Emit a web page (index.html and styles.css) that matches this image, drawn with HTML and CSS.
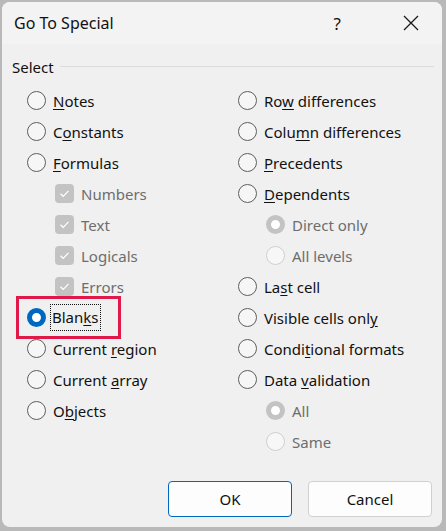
FILE: index.html
```html
<!DOCTYPE html>
<html>
<head>
<meta charset="utf-8">
<link rel="stylesheet" href="styles.css">
</head>
<body>
<div class="dialog">
  <div class="titlebar">
    <span class="title">Go To Special</span>
    <span class="help">?</span>
    <span class="close"><svg width="16" height="16" viewBox="0 0 16 16"><path d="M1 1 L15 15 M15 1 L1 15" stroke="#1a1a1a" stroke-width="1.3" fill="none"/></svg></span>
  </div>
  <div class="content">
    <div class="group-label"><span>Select</span><span class="rule"></span></div>
    <div class="columns">
      <div class="col col-left">
        <div class="opt"><span class="radio"></span><span class="lbl"><u>N</u>otes</span></div>
        <div class="opt"><span class="radio"></span><span class="lbl">C<u>o</u>nstants</span></div>
        <div class="opt"><span class="radio"></span><span class="lbl"><u>F</u>ormulas</span></div>
        <div class="opt sub"><span class="check"><svg width="19" height="19" viewBox="0 0 19 19"><path d="M5.5 9.8 L8.2 12.3 L13.5 6.8" stroke="#fff" stroke-width="1.2" fill="none"/></svg></span><span class="lbl dis">Numbers</span></div>
        <div class="opt sub"><span class="check"><svg width="19" height="19" viewBox="0 0 19 19"><path d="M5.5 9.8 L8.2 12.3 L13.5 6.8" stroke="#fff" stroke-width="1.2" fill="none"/></svg></span><span class="lbl dis">Text</span></div>
        <div class="opt sub"><span class="check"><svg width="19" height="19" viewBox="0 0 19 19"><path d="M5.5 9.8 L8.2 12.3 L13.5 6.8" stroke="#fff" stroke-width="1.2" fill="none"/></svg></span><span class="lbl dis">Logicals</span></div>
        <div class="opt sub"><span class="check"><svg width="19" height="19" viewBox="0 0 19 19"><path d="M5.5 9.8 L8.2 12.3 L13.5 6.8" stroke="#fff" stroke-width="1.2" fill="none"/></svg></span><span class="lbl dis">Errors</span></div>
        <div class="opt highlight"><span class="radio on"></span><span class="lbl focus">Blan<u>k</u>s</span></div>
        <div class="opt"><span class="radio"></span><span class="lbl">Current <u>r</u>egion</span></div>
        <div class="opt"><span class="radio"></span><span class="lbl">Current <u>a</u>rray</span></div>
        <div class="opt"><span class="radio"></span><span class="lbl">O<u>b</u>jects</span></div>
      </div>
      <div class="col col-right">
        <div class="opt"><span class="radio"></span><span class="lbl">Ro<u>w</u> differences</span></div>
        <div class="opt"><span class="radio"></span><span class="lbl">Colu<u>m</u>n differences</span></div>
        <div class="opt"><span class="radio"></span><span class="lbl"><u>P</u>recedents</span></div>
        <div class="opt"><span class="radio"></span><span class="lbl"><u>D</u>ependents</span></div>
        <div class="opt sub"><span class="radio dis-on"></span><span class="lbl dis">Direct only</span></div>
        <div class="opt sub"><span class="radio dis-off"></span><span class="lbl dis">All levels</span></div>
        <div class="opt"><span class="radio"></span><span class="lbl">La<u>s</u>t cell</span></div>
        <div class="opt"><span class="radio"></span><span class="lbl">Visible cells onl<u>y</u></span></div>
        <div class="opt"><span class="radio"></span><span class="lbl">Condi<u>t</u>ional formats</span></div>
        <div class="opt"><span class="radio"></span><span class="lbl">Data <u>v</u>alidation</span></div>
        <div class="opt sub"><span class="radio dis-on"></span><span class="lbl dis">All</span></div>
        <div class="opt sub"><span class="radio dis-off"></span><span class="lbl dis">Same</span></div>
      </div>
    </div>
    <div class="buttons">
      <button class="btn primary">OK</button>
      <button class="btn">Cancel</button>
    </div>
  </div>
</div>
</body>
</html>
```
FILE: styles.css
```css
html, body {
  margin: 0;
  padding: 0;
}
body {
  background: #b9b9b9;
  width: 446px;
  height: 531px;
  overflow: hidden;
  font-family: "Noto Sans", "Open Sans", sans-serif;
  color: #111111;
}
.dialog {
  margin: 2px 0 0 2px;
  width: 440px;
  height: 525px;
  background: #f0f0f0;
  border-radius: 8px;
  overflow: hidden;
  box-sizing: border-box;
  display: flex;
  flex-direction: column;
}
.titlebar {
  height: 42px;
  background: #f3f3f3;
  display: flex;
  align-items: center;
  flex: none;
}
.title {
  margin-left: 12px;
  font-size: 16px;
  color: #111111;
}
.help {
  margin-left: auto;
  margin-right: 62px;
  font-size: 17px;
  color: #111111;
}
.close {
  margin-right: 23px;
  display: flex;
  width: 16px;
  height: 16px;
}
.content {
  flex: 1;
  display: flex;
  flex-direction: column;
}
.group-label {
  display: flex;
  align-items: center;
  height: 46px;
  padding: 0 8px 0 10px;
  font-size: 15px;
}
.group-label .rule {
  flex: 1;
  height: 1px;
  background: #dcdcdc;
  margin-left: 6px;
  margin-top: -2px;
}
.columns {
  display: flex;
  margin-top: -5px;
}
.col {
  display: flex;
  flex-direction: column;
}
.col-left {
  width: 211px;
  padding-left: 25px;
}
.opt {
  display: flex;
  align-items: center;
  height: 31px;
  font-size: 15px;
  position: relative;
}
.opt.sub {
  padding-left: 28px;
}
.radio {
  width: 19px;
  height: 19px;
  box-sizing: border-box;
  border: 1px solid #5e5e5e;
  border-radius: 50%;
  background: #f6f6f6;
  flex: none;
}
.radio.on {
  border: 5px solid #0067c0;
  background: #fff;
}
.radio.dis-on {
  border: 5px solid #c3c3c3;
  background: #fff;
}
.radio.dis-off {
  border: 1px solid #cfcfcf;
  background: #f7f7f7;
}
.check {
  width: 19px;
  height: 19px;
  border-radius: 4px;
  background: #c3c3c3;
  flex: none;
  display: flex;
}
.lbl {
  margin-left: 7px;
  white-space: nowrap;
}
.lbl u {
  text-underline-offset: 2px;
}
.lbl.dis {
  color: #6d6d6d;
}
.lbl.focus {
  outline: 1px dotted #111111;
  padding: 2px 1px 3px 1px;
  margin-left: 5px;
}
.highlight::before {
  content: "";
  position: absolute;
  left: -11px;
  top: -6px;
  width: 105px;
  height: 43px;
  box-sizing: border-box;
  border: 3px solid #e0194a;
}
.buttons {
  margin-top: auto;
  display: flex;
  justify-content: flex-end;
  gap: 16px;
  padding: 0 10px 10px 0;
}
.btn {
  width: 124px;
  height: 36px;
  background: #fdfdfd;
  border: 1px solid #d0d0d0;
  border-radius: 4px;
  font-family: "Noto Sans", "Open Sans", sans-serif;
  font-size: 15px;
  color: #111111;
  padding: 0;
}
.btn.primary {
  border: 1px solid #0067c0;
}
```
